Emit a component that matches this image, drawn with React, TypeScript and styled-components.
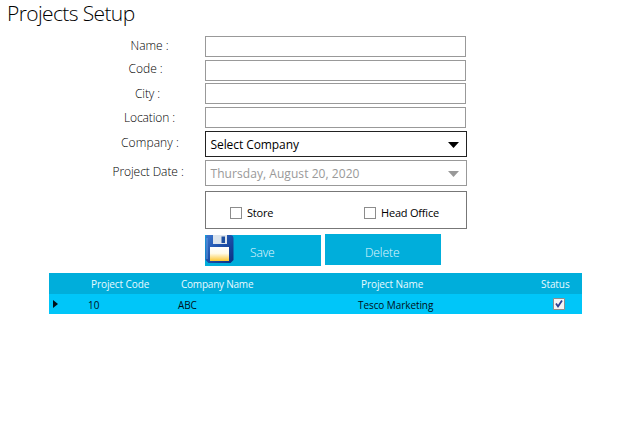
import React from "react";
import styled, { createGlobalStyle } from "styled-components";

const GlobalStyle = createGlobalStyle`
  * { box-sizing: border-box; }
  body {
    margin: 0;
    background: #fff;
    color: #000;
    font-family: "Open Sans", "Noto Sans", sans-serif;
    overflow: hidden;
  }
`;

const Page = styled.main`
  width: 636px;
  height: 429px;
  background: #fff;
`;

const Title = styled.h1`
  margin: 0;
  height: 36px;
  padding-left: 7px;
  font-size: 21px;
  line-height: 27px;
  font-weight: 300;
  letter-spacing: -0.62px;
  white-space: nowrap;
`;

const Form = styled.form`
  display: flex;
  flex-direction: column;
`;

const Row = styled.div<{ $height: number }>`
  display: flex;
  height: ${(p) => p.$height}px;
`;

const Label = styled.label<{ $indent: number; $drop: number; $track: number }>`
  flex: 0 0 205px;
  padding: ${(p) => p.$drop}px 0 0 ${(p) => p.$indent}px;
  font-size: 12px;
  line-height: 18px;
  font-weight: 300;
  letter-spacing: ${(p) => p.$track}px;
  white-space: pre;
`;

const TextInput = styled.input`
  width: 261px;
  height: 21px;
  margin-top: 0;
  padding: 0 5px;
  border: 1px solid #999;
  background: #fff;
  font: 12px "Open Sans", sans-serif;
  outline: none;
`;

const Select = styled.div<{ $muted?: boolean }>`
  display: flex;
  align-items: center;
  justify-content: space-between;
  width: 262px;
  height: 26px;
  padding: 1px 7px 0 4.5px;
  border: 1px solid ${(p) => (p.$muted ? "#999" : "#222")};
  color: ${(p) => (p.$muted ? "#999" : "#000")};
  font-size: 12px;
  letter-spacing: ${(p) => (p.$muted ? 0.06 : -0.08)}px;
  white-space: nowrap;
`;

const Options = styled.div`
  display: flex;
  align-items: center;
  width: 262px;
  height: 38px;
  margin: 0 0 6px 205px;
  padding: 5px 0 0 24px;
  border: 1px solid #777;
`;

const Option = styled.span<{ $width: number; $track: number }>`
  display: flex;
  align-items: center;
  gap: 5px;
  width: ${(p) => p.$width}px;
  font-size: 11px;
  letter-spacing: ${(p) => p.$track}px;
  white-space: nowrap;
`;

const Box = styled.i`
  width: 12px;
  height: 12px;
  border: 1px solid #8c8c8c;
  background: #fff;
`;

const Actions = styled.div`
  display: flex;
  gap: 4px;
  height: 38px;
  padding-left: 205px;
`;

const Button = styled.button<{ $top: number; $textPad: number }>`
  display: flex;
  align-items: center;
  width: 116px;
  height: 31px;
  margin: ${(p) => p.$top}px 0 0;
  padding: 0 0 0 ${(p) => p.$textPad}px;
  border: 0;
  background: #00aedb;
  color: #e4f8ff;
  font: 300 12px "Open Sans", sans-serif;
`;

const ButtonText = styled.span<{ $drop: number }>`
  padding-top: ${(p) => p.$drop}px;
  letter-spacing: -0.1px;
`;

const DiskIcon = styled.svg`
  flex: none;
  width: 29px;
  height: 29px;
  margin: -3px 16px 0 0;
`;

const Table = styled.section`
  width: 533px;
  margin-left: 49px;
  font-size: 10px;
`;

const TableRow = styled.div<{ $header?: boolean }>`
  display: grid;
  grid-template-columns: 39px 90px 180px 180px 44px;
  align-items: center;
  height: ${(p) => (p.$header ? 21 : 20)}px;
  padding-left: ${(p) => (p.$header ? 3 : 0)}px;
  background: ${(p) => (p.$header ? "#00aedb" : "#00c6f9")};
  color: ${(p) => (p.$header ? "#e9faff" : "#001018")};
`;

const Cell = styled.span<{ $track?: number }>`
  padding-top: 1px;
  line-height: 14px;
  letter-spacing: ${(p) => p.$track ?? -0.08}px;
  white-space: nowrap;
`;

const RowMarker = styled.svg`
  width: 5px;
  height: 8px;
  margin-left: 4px;
`;

const StatusMark = styled.svg`
  width: 12px;
  height: 12px;
  margin-left: 15px;
`;

const fields = [
  { name: "Name :", indent: 130.5, drop: 1, track: 0, height: 24 },
  { name: "Code :", indent: 128.5, drop: 0, track: 0, height: 23 },
  { name: "City :", indent: 135, drop: 2, track: -0.1, height: 24 },
  { name: "Location :", indent: 124, drop: 2, track: -0.12, height: 24 },
];

const Caret = ({ fill }: { fill: string }) => (
  <svg width="11" height="6" viewBox="0 0 11 6">
    <path d="M0 0H11L5.5 6Z" fill={fill} />
  </svg>
);

const Disk = () => (
  <DiskIcon viewBox="0 0 29 29">
    <defs>
      <linearGradient id="shell" x2="1" y2="1">
        <stop stopColor="#3d78cf" />
        <stop offset=".5" stopColor="#1c4ea8" />
        <stop offset="1" stopColor="#0c2f80" />
      </linearGradient>
      <linearGradient id="paper" x2="0" y2="1">
        <stop stopColor="#fff" />
        <stop offset=".45" stopColor="#fffbea" />
        <stop offset="1" stopColor="#fcc630" />
      </linearGradient>
    </defs>
    <path d="M2 0H26Q28.500 .3 28.500 3V25L25.500 28H3.500L.5 25V2Q.5 .3 2 0Z" fill="url(#shell)" />
    <path d="M8 0H22V9H8Z" fill="#dce4ec" />
    <path d="M16.500 1.500H20V8H16.500Z" fill="#1e4f9f" />
    <path d="M5 12H24V26H5Z" fill="url(#paper)" />
    <path d="M2 3V24" stroke="#5d9be5" strokeWidth="1" />
  </DiskIcon>
);

export default function App() {
  return (
    <Page>
      <GlobalStyle />
      <Title>Projects Setup</Title>
      <Form>
        {fields.map((f) => (
          <Row key={f.name} $height={f.height}>
            <Label $indent={f.indent} $drop={f.drop} $track={f.track}>{f.name}</Label>
            <TextInput aria-label={f.name} />
          </Row>
        ))}
        <Row $height={29}>
          <Label $indent={121} $drop={3} $track={0.1}>Company :</Label>
          <Select>Select Company<Caret fill="#000" /></Select>
        </Row>
        <Row $height={31}>
          <Label $indent={112.5} $drop={3} $track={-0.08}>Project Date :</Label>
          <Select $muted>Thursday, August 20, 2020<Caret fill="#999" /></Select>
        </Row>
        <Options>
          <Option $width={134} $track={-0.2}><Box />Store</Option>
          <Option $width={90} $track={-0.2}><Box />Head Office</Option>
        </Options>
        <Actions>
          <Button type="button" $top={0} $textPad={0}><Disk /><ButtonText $drop={4}>Save</ButtonText></Button>
          <Button type="button" $top={-1} $textPad={40}><ButtonText $drop={5}>Delete</ButtonText></Button>
        </Actions>
      </Form>
      <Table>
        <TableRow $header>
          <span />
          <Cell>Project Code</Cell>
          <Cell $track={-0.22}>Company Name</Cell>
          <Cell>Project Name</Cell>
          <Cell>Status</Cell>
        </TableRow>
        <TableRow>
          <RowMarker viewBox="0 0 5 8"><path d="M0 0L5 4L0 8Z" fill="#001018" /></RowMarker>
          <Cell>10</Cell>
          <Cell>ABC</Cell>
          <Cell>Tesco Marketing</Cell>
          <StatusMark viewBox="0 0 12 12">
            <path d="M.5 .5H11.500V11.500H.5Z" fill="#f4f4f4" stroke="#8d8d8d" />
            <path d="M3 5.500L5 8.500L9 2.500" fill="none" stroke="#2c3d8f" strokeWidth="1.800" />
          </StatusMark>
        </TableRow>
      </Table>
    </Page>
  );
}
